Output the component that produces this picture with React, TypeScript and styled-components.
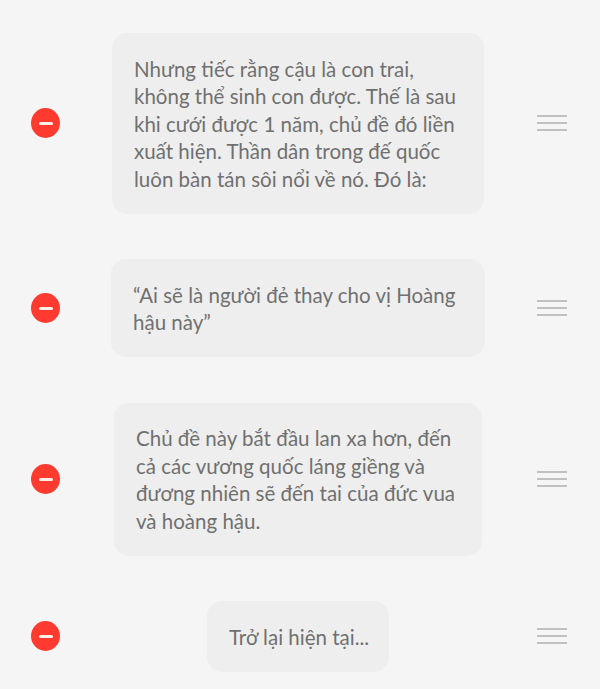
import styled, { createGlobalStyle } from "styled-components";

const GlobalStyle = createGlobalStyle`
  html, body {
    margin: 0;
    padding: 0;
    background: #f5f5f5;
  }
`;

const List = styled.div`
  display: flex;
  flex-direction: column;
  gap: 45.5px;
  width: 600px;
  height: 689px;
  overflow: hidden;
  box-sizing: border-box;
  padding: 33px 33px 0 31px;
  background: #f5f5f5;
  font-family: Lato, "Noto Sans", sans-serif;
`;

const Row = styled.div`
  display: grid;
  grid-template-columns: 30px 1fr 32px;
  align-items: center;
`;

const RemoveButton = styled.div`
  width: 29px;
  height: 30px;
  border-radius: 50%;
  background: #ff3b30;
  display: flex;
  align-items: center;
  justify-content: center;

  &::after {
    content: "";
    width: 14px;
    height: 3px;
    border-radius: 2px;
    background: #fbeee6;
  }
`;

const Bubble = styled.div<{ $width: number }>`
  width: ${(props) => props.$width}px;
  justify-self: center;
  box-sizing: border-box;
  padding: 22.5px 22px 20.5px;
  border-radius: 15px;
  background: #eeeeee;
  color: #707070;
  font-size: 20.5px;
  line-height: 27.5px;
  white-space: nowrap;
`;

const Handle = styled.div`
  display: flex;
  flex-direction: column;
  gap: 5px;
  width: 30px;
  justify-self: end;
`;

const HandleBar = styled.div`
  height: 2px;
  background: #c0c0c0;
`;

const items = [
  {
    width: 372,
    lines: [
      "Nhưng tiếc rằng cậu là con trai,",
      "không thể sinh con được. Thế là sau",
      "khi cưới được 1 năm, chủ đề đó liền",
      "xuất hiện. Thần dân trong đế quốc",
      "luôn bàn tán sôi nổi về nó. Đó là:",
    ],
  },
  {
    width: 374,
    lines: ["“Ai sẽ là người đẻ thay cho vị Hoàng", "hậu này”"],
  },
  {
    width: 368,
    lines: [
      "Chủ đề này bắt đầu lan xa hơn, đến",
      "cả các vương quốc láng giềng và",
      "đương nhiên sẽ đến tai của đức vua",
      "và hoàng hậu.",
    ],
  },
  {
    width: 182,
    lines: ["Trở lại hiện tại..."],
  },
];

function App() {
  return (
    <>
      <GlobalStyle />
      <List>
        {items.map((item) => (
          <Row key={item.lines[0]}>
            <RemoveButton />
            <Bubble $width={item.width}>
              {item.lines.map((line) => (
                <div key={line}>{line}</div>
              ))}
            </Bubble>
            <Handle>
              <HandleBar />
              <HandleBar />
              <HandleBar />
            </Handle>
          </Row>
        ))}
      </List>
    </>
  );
}

export default App;
